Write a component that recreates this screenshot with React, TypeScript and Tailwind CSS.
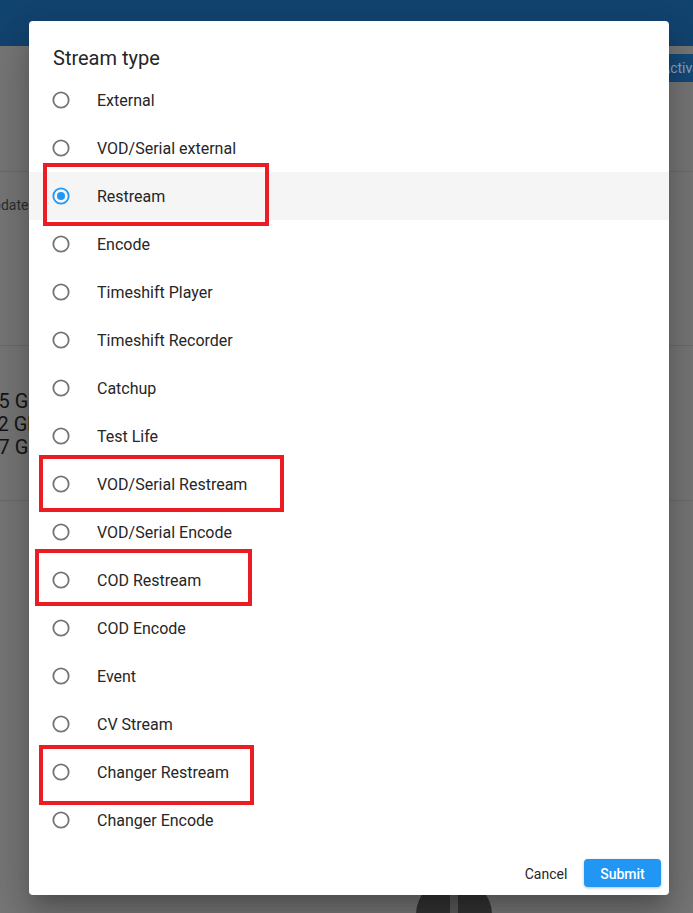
import { useState } from "react";

const streamTypes = [
    "External",
    "VOD/Serial external",
    "Restream",
    "Encode",
    "Timeshift Player",
    "Timeshift Recorder",
    "Catchup",
    "Test Life",
    "VOD/Serial Restream",
    "VOD/Serial Encode",
    "COD Restream",
    "COD Encode",
    "Event",
    "CV Stream",
    "Changer Restream",
    "Changer Encode",
];

function RadioIcon({ checked }: { checked: boolean }) {
    const color = checked ? "#2196f3" : "#757575";
    return (
        <svg width="20" height="20" viewBox="0 0 20 20" className="shrink-0">
            <circle cx="10" cy="10" r="7.7" fill="none" stroke={color} strokeWidth="1.8" />
            {checked && <circle cx="10" cy="10" r="4" fill={color} />}
        </svg>
    );
}

export default function App() {
    const [selected, setSelected] = useState("Restream");

    return (
        <div className="relative w-[693px] h-[913px] overflow-hidden bg-[#777777] font-['Roboto','Liberation_Sans',sans-serif]">
            {/* Page behind the dialog (already dimmed) */}
            <div className="flex flex-col h-full">
                <div className="h-[46px] bg-[#124470] shrink-0" />

                <div className="h-[126px] shrink-0 border-b border-[#6b6b6b] pt-[8px] pl-[652px]">
                    <div className="h-[28px] w-[90px] bg-[#144a78] rounded-[4px] flex items-center pl-[9px] text-[14px] text-[#8fa5bd] whitespace-nowrap">
                        Activate
                    </div>
                </div>

                <div className="h-[174px] shrink-0 border-b border-[#6b6b6b] pt-[23px]">
                    <div className="ml-[-16px] text-[14px] leading-5 text-[#2e2e2e] whitespace-nowrap">Update</div>
                </div>

                <div className="h-[155px] shrink-0 border-b border-[#6b6b6b] pt-[44px] text-[20px] leading-[23px] text-[#151515]">
                    <div className="ml-[-18px] whitespace-nowrap">1.5 Gb</div>
                    <div className="ml-[-19px] whitespace-nowrap">3.2 Gb</div>
                    <div className="ml-[-18px] whitespace-nowrap">4.7 Gb</div>
                </div>

                <div className="flex-1 flex flex-col justify-end">
                    <div className="ml-[416px] mb-[-40px] w-[76px] h-[76px] rounded-full bg-[#343434] flex justify-center">
                        <div className="w-[8px] h-full bg-[#5c5c5c]" />
                    </div>
                </div>
            </div>

            {/* Dialog */}
            <div className="absolute left-[29px] top-[21px] w-[640px] h-[874px] bg-white rounded-[4px] flex flex-col shadow-[0_11px_15px_-7px_rgba(0,0,0,0.2),0_24px_38px_3px_rgba(0,0,0,0.14),0_9px_46px_8px_rgba(0,0,0,0.12)]">
                <h2 className="pt-[21px] pb-[2px] pl-[24px] text-[20px] leading-[32px] font-normal text-[#262626]">
                    Stream type
                </h2>

                <div className="flex flex-col">
                    {streamTypes.map((type) => (
                        <div
                            key={type}
                            onClick={() => setSelected(type)}
                            className={`h-[48px] flex items-center pl-[22px] cursor-pointer ${selected === type ? "bg-[#f5f5f5]" : ""}`}
                        >
                            <RadioIcon checked={selected === type} />
                            <span className="ml-[26px] pt-[2px] text-[16px] text-[#262626]">{type}</span>
                        </div>
                    ))}
                </div>

                <div className="flex-1 flex justify-end items-end gap-[6px] pr-[8px] pb-[8px]">
                    <button className="h-[28px] min-w-[64px] px-[5px] pt-[2px] rounded-[4px] text-[14px] text-[#262626]">
                        Cancel
                    </button>
                    <button className="h-[28px] w-[77px] pt-[2px] rounded-[4px] bg-[#2196f3] text-[14px] font-medium text-white shadow-[0_1px_3px_rgba(0,0,0,0.25)]">
                        Submit
                    </button>
                </div>
            </div>

            {/* Red annotation boxes */}
            <div className="absolute left-[43px] top-[163px] w-[226px] h-[63px] border-[4px] border-[#ec1c24]" />
            <div className="absolute left-[39px] top-[455px] w-[245px] h-[57px] border-[4px] border-[#ec1c24]" />
            <div className="absolute left-[35px] top-[549px] w-[217px] h-[57px] border-[4px] border-[#ec1c24]" />
            <div className="absolute left-[39px] top-[745px] w-[215px] h-[60px] border-[4px] border-[#ec1c24]" />
        </div>
    );
}
